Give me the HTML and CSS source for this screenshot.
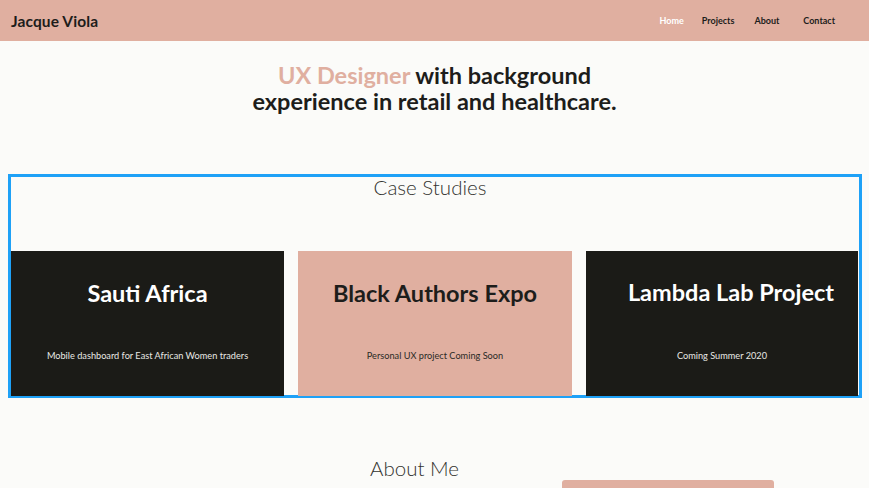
FILE: index.html
```html
<!DOCTYPE html>
<html lang="en">
<head>
<meta charset="utf-8">
<title>Jacque Viola</title>
<link rel="stylesheet" href="styles.css">
</head>
<body>
<header class="topbar">
  <div class="logo">Jacque Viola</div>
  <nav class="nav">
    <a class="nav-link active" href="#">Home</a>
    <a class="nav-link" href="#">Projects</a>
    <a class="nav-link about-link" href="#">About</a>
    <a class="nav-link contact" href="#">Contact</a>
  </nav>
</header>
<section class="hero">
  <h1 class="hero-title"><span class="accent">UX Designer</span> with background<br>experience in retail and healthcare.</h1>
</section>
<section class="cases">
  <h2 class="section-title">Case Studies</h2>
  <div class="cards">
    <div class="card dark">
      <h3 class="card-title">Sauti Africa</h3>
      <p class="card-sub">Mobile dashboard for East African Women traders</p>
    </div>
    <div class="card pink">
      <h3 class="card-title">Black Authors Expo</h3>
      <p class="card-sub">Personal UX project Coming Soon</p>
    </div>
    <div class="card dark shifted">
      <h3 class="card-title">Lambda Lab Project</h3>
      <p class="card-sub">Coming Summer 2020</p>
    </div>
  </div>
</section>
<section class="about">
  <h2 class="section-title about-title">About Me</h2>
  <div class="about-box"></div>
</section>
</body>
</html>
```
FILE: styles.css
```css
* { box-sizing: border-box; }
html, body { margin: 0; padding: 0; }
body {
  background: #fbfbf9;
  font-family: Lato, "Open Sans", sans-serif;
  color: #1d1d1b;
  overflow: hidden;
  height: 488px;
}
.topbar {
  height: 41px;
  background: #e0afa0;
  display: flex;
  align-items: center;
  justify-content: space-between;
  padding: 0 0 0 11px;
}
.logo {
  font-size: 15.5px;
  font-weight: 700;
  color: #1d1d1b;
  letter-spacing: 0.1px;
}
.nav {
  display: flex;
  align-items: center;
  gap: 18px;
  padding-right: 34px;
}
.nav-link {
  font-size: 9px;
  font-weight: 700;
  color: #1d1d1b;
  text-decoration: none;
}
.nav-link.active { color: #ffffff; }
.nav-link.about-link { margin-left: 2px; }
.nav-link.contact { margin-left: 6px; }
.hero {
  padding-top: 21px;
  text-align: center;
}
.hero-title {
  margin: 0;
  font-size: 23.5px;
  line-height: 26px;
  font-weight: 700;
  color: #1d1d1b;
}
.accent { color: #e0afa0; }
.cases {
  margin: 60px 0 0 8px;
  width: 854px;
  border: 3px solid #1ea1f7;
  height: 224px;
}
.section-title {
  margin: 0;
  text-align: center;
  font-size: 20.5px;
  line-height: 22px;
  font-weight: 300;
  color: #333330;
}
.cases .section-title {
  margin-top: -1px;
  margin-right: 10px;
}
.cards {
  margin-top: 53px;
  display: grid;
  grid-template-columns: 273px 274px 272px;
  column-gap: 14px;
}
.card {
  height: 145px;
  display: flex;
  flex-direction: column;
  align-items: center;
  text-align: center;
}
.card.dark { background: #1b1b17; color: #ffffff; }
.card.pink { background: #e0afa0; color: #1d1d1b; }
.card-title {
  margin: 29px 0 0;
  font-size: 23.5px;
  line-height: 26px;
  font-weight: 700;
}
.card.shifted .card-title { margin-top: 28px; padding-left: 18px; }
.card.shifted .card-sub { margin-top: 45px; }
.card-sub {
  margin: 44px 0 0;
  font-family: Lato, "Open Sans", sans-serif;
  font-size: 9.2px;
  line-height: 12px;
}
.card.dark .card-sub { color: #e8e8e4; }
.card.pink .card-sub { color: #2a2a26; }
.about {
  margin-top: 59px;
}
.about-title { margin-right: 40px; }
.about-box {
  margin: 1px 0 0 562px;
  width: 212px;
  height: 30px;
  background: #e0afa0;
  border-radius: 3px 3px 0 0;
}
```
